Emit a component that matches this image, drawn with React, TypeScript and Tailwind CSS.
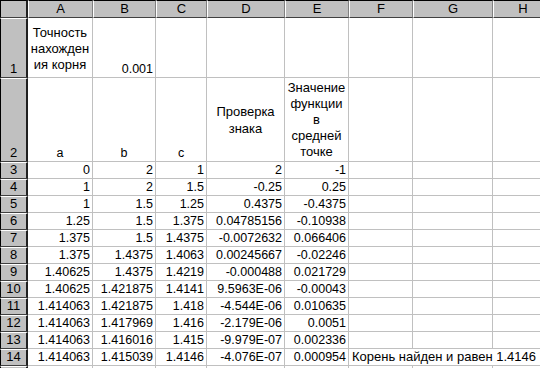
import React from "react";

const cols = ["A", "B", "C", "D", "E", "F", "G", "H"];

const data: string[][] = [
  ["0", "2", "1", "2", "-1"],
  ["1", "2", "1.5", "-0.25", "0.25"],
  ["1", "1.5", "1.25", "0.4375", "-0.4375"],
  ["1.25", "1.5", "1.375", "0.04785156", "-0.10938"],
  ["1.375", "1.5", "1.4375", "-0.0072632", "0.066406"],
  ["1.375", "1.4375", "1.4063", "0.00245667", "-0.02246"],
  ["1.40625", "1.4375", "1.4219", "-0.000488", "0.021729"],
  ["1.40625", "1.421875", "1.4141", "9.5963E-06", "-0.00043"],
  ["1.414063", "1.421875", "1.418", "-4.544E-06", "0.010635"],
  ["1.414063", "1.417969", "1.416", "-2.179E-06", "0.0051"],
  ["1.414063", "1.416016", "1.415", "-9.979E-07", "0.002336"],
  ["1.414063", "1.415039", "1.4146", "-4.076E-07", "0.000954"],
];

const cell = "border-r border-b border-[#c0c0c0] flex px-[2px] pb-[1px] leading-[14px] text-black";
const rowHdr =
  "bg-[#c0c0c0] border-l border-l-black border-t border-t-white border-r-2 border-r-[#202020] border-b border-b-[#404040] flex items-end justify-center pb-[1px] text-[13px] leading-[14px]";
const colHdr =
  "bg-[#c0c0c0] border-t border-t-black border-l border-l-white border-r border-r-[#808080] border-b border-b-[#404040] flex items-center justify-center text-[13px] leading-[14px]";

export default function App() {
  return (
    <div
      className="w-[540px] h-[368px] overflow-hidden bg-white text-[12.5px]"
      style={{ fontFamily: '"Liberation Sans", Arial, sans-serif' }}
    >
      <div className="grid grid-cols-[28px_65px_63px_51px_78px_64px_64px_80px_60px] grid-rows-[18px_60px_84px_repeat(13,17px)]">
        {/* header row */}
        <div className="bg-[#c0c0c0] border-t border-t-black border-l border-l-black border-r-2 border-r-[#202020] border-b border-b-[#404040]" />
        {cols.map((c) => (
          <div key={c} className={colHdr}>
            {c}
          </div>
        ))}

        {/* row 1 */}
        <div className={rowHdr}>1</div>
        <div className={`${cell} flex-col items-center justify-end text-center leading-[16px] text-[13px] pb-[4px] whitespace-nowrap`}>
          <span>Точность</span>
          <span>нахожден</span>
          <span>ия корня</span>
        </div>
        <div className={`${cell} items-end justify-end`}>0.001</div>
        <div className={cell} />
        <div className={cell} />
        <div className={cell} />
        <div className={cell} />
        <div className={cell} />
        <div className={cell} />

        {/* row 2 */}
        <div className={rowHdr}>2</div>
        <div className={`${cell} items-end justify-center`}>a</div>
        <div className={`${cell} items-end justify-center`}>b</div>
        <div className={`${cell} items-end justify-center`}>c</div>
        <div className={`${cell} flex-col items-center justify-center text-center leading-[17px] text-[13px] pt-[2px] whitespace-nowrap`}>
          <span>Проверка</span>
          <span>знака</span>
        </div>
        <div className={`${cell} flex-col items-center justify-end text-center leading-[16px] text-[13px] whitespace-nowrap`}>
          <span>Значение</span>
          <span>функции</span>
          <span>в</span>
          <span>средней</span>
          <span>точке</span>
        </div>
        <div className={cell} />
        <div className={cell} />
        <div className={cell} />

        {/* data rows */}
        {data.map((r, i) => {
          const n = i + 3;
          const last = n === 14;
          return (
            <React.Fragment key={n}>
              <div className={rowHdr}>{n}</div>
              {r.map((v, j) => (
                <div key={j} className={`${cell} items-end justify-end whitespace-nowrap`}>
                  {v}
                </div>
              ))}
              {last ? (
                <div className={`${cell} col-span-3 items-end justify-start whitespace-nowrap pl-[3px] border-r-0 text-[13px]`}>
                  Корень найден и равен 1.4146
                </div>
              ) : (
                <>
                  <div className={cell} />
                  <div className={cell} />
                  <div className={cell} />
                </>
              )}
            </React.Fragment>
          );
        })}

        {/* row 15 (only its top edge is visible) */}
        <div className={rowHdr} />
        {cols.map((c) => (
          <div key={c} className={cell} />
        ))}
      </div>
    </div>
  );
}
